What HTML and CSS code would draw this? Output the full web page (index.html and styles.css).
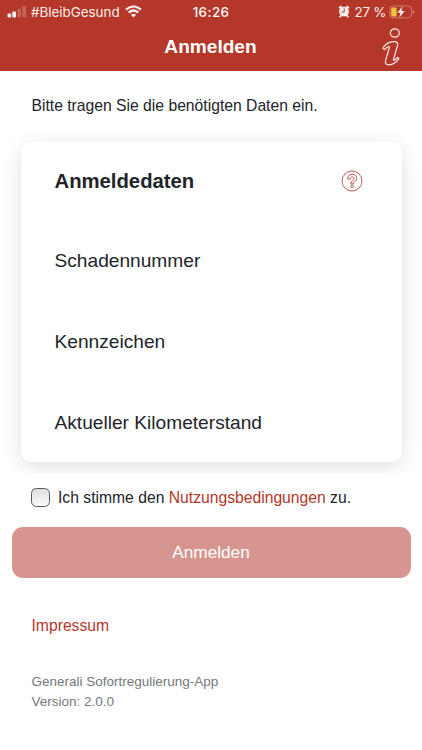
FILE: index.html
```html
<!DOCTYPE html>
<html lang="de">
<head>
    <meta charset="UTF-8">
    <meta name="viewport" content="width=device-width, initial-scale=1.0">
    <title>Anmelden</title>
    <link rel="stylesheet" href="styles.css">
</head>
<body>
    <header class="header">
        <div class="statusbar">
            <div class="status-left">
                <svg class="signal" width="20" height="12" viewBox="0 0 20 12" fill="#fff">
                    <rect x="0.5" y="7.5" width="3.7" height="4" rx="1"/>
                    <rect x="5.3" y="5.5" width="3.7" height="6" rx="1"/>
                    <rect x="10.3" y="3" width="3.7" height="8.5" rx="1" opacity=".25"/>
                    <rect x="15.3" y="0.3" width="3.7" height="11.2" rx="1" opacity=".25"/>
                </svg>
                <span class="carrier">#BleibGesund</span>
                <svg class="wifi" width="17" height="13" viewBox="0 0 17 13" fill="none" stroke="#fff" stroke-width="2.3">
                    <path d="M1 4.7Q8.5 -1.9 16 4.7"/>
                    <path d="M3.7 7.6Q8.5 3.5 13.3 7.6"/>
                    <path d="M8.5 12.4L5.9 9.7Q8.5 7.6 11.1 9.7Z" fill="#fff" stroke="none"/>
                </svg>
            </div>
            <span class="time">16:26</span>
            <div class="status-right">
                <svg width="12" height="13" viewBox="0 0 12 13" fill="none" stroke="#fff" stroke-linecap="round">
                    <circle cx="6" cy="6.6" r="4.9" fill="#fff" stroke="none"/>
                    <path d="M1.7 2.6L3 1.6M10.3 2.6L9 1.6M2.9 10.8L2.2 11.6M9.1 10.8L9.8 11.6" stroke-width="1.9"/>
                    <path d="M6.2 3.8V7H3.9" stroke="#b43729" stroke-width="1"/>
                </svg>
                <span class="percent">27 %</span>
                <svg class="battery" width="26" height="14" viewBox="0 0 28 14" preserveAspectRatio="none">
                    <rect x="0.8" y="0.9" width="23.6" height="12" rx="3.5" fill="none" stroke="#fff" stroke-opacity=".4"/>
                    <path d="M25.8 5v4q1.5-.6 1.5-2t-1.5-2z" fill="#fff" opacity=".45"/>
                    <path d="M4 2.4H8.2V11.4H4Q2.3 11.4 2.3 9.7V4.1Q2.3 2.4 4 2.4Z" fill="#f7cf46"/>
                    <path d="M14.6 1.3L9 7.7H12.3L11 12.7L16.8 6H13.4Z" fill="#fff"/>
                </svg>
            </div>
        </div>
        <div class="titlebar">
            <h1>Anmelden</h1>
            <svg class="info" width="22" height="40" viewBox="0 0 22 40" fill="none" stroke="#fff" stroke-opacity=".9" stroke-width="1.2" stroke-linejoin="round">
                <ellipse cx="13.8" cy="6" rx="4.5" ry="4.2"/>
                <path d="M2 21.2C4 17.5 8 14.9 12.6 14.7C15.7 14.5 17.2 15.7 16.5 18.5L12.5 32.7C12.4 34.1 14.4 33 16.4 30.3L18 31.6C15.2 35.4 11.5 37.8 7.9 37.8C4.9 37.7 3.8 36.1 4.6 33.3L8.3 20.7C8.6 18.9 6.7 19.2 3.6 22.6Z"/>
            </svg>
        </div>
    </header>

    <main>
        <p class="intro">Bitte tragen Sie die benötigten Daten ein.</p>

        <form>
            <div class="card-wrapper">
                <div class="card">
                    <div class="card-head">
                        <h2>Anmeldedaten</h2>
                        <svg class="help" width="22" height="22" viewBox="0 0 22 22" fill="none" stroke="#bd4a42" stroke-width=".9">
                            <circle cx="11" cy="11" r="10"/>
                            <path d="M6.7 8.9C6.7 6 8.5 4.4 11.2 4.4C13.9 4.4 15.7 5.9 15.7 8.3C15.7 11.1 12.5 11.4 12.4 13.9H9.8C9.6 10.7 13.1 10.4 13.1 8.5C13.1 6.4 9.3 6.2 8.9 9.3Z"/>
                            <circle cx="11.1" cy="16.3" r="1.4"/>
                        </svg>
                    </div>
                    <div class="field">Schadennummer</div>
                    <div class="field">Kennzeichen</div>
                    <div class="field">Aktueller Kilometerstand</div>
                </div>
            </div>

            <div class="terms">
                <input type="checkbox" id="terms">
                <label for="terms">Ich stimme den <a href="#">Nutzungsbedingungen</a> zu.</label>
            </div>

            <button type="button" class="submit">Anmelden</button>
        </form>
    </main>

    <footer>
        <a class="imprint" href="#">Impressum</a>
        <p>Generali Sofortregulierung-App<br>Version: 2.0.0</p>
    </footer>
</body>
</html>
```

FILE: styles.css
```css
* {
    box-sizing: border-box;
}
body {
    margin: 0;
    background: #fff;
    color: #212529;
    font-family: "Liberation Sans", Arial, sans-serif;
    font-size: 15.7px;
}
h1, h2, p {
    margin: 0;
}
a {
    color: #b43729;
    text-decoration: none;
}
svg {
    display: block;
}
.header {
    height: 71px;
    background: #b43729;
    color: #fff;
}
.statusbar {
    display: grid;
    grid-template-columns: 1fr auto 1fr;
    align-items: center;
    height: 23px;
    padding: 0 7px;
    font-family: Inter, sans-serif;
    font-size: 13.4px;
}
.status-left, .status-right {
    display: flex;
    align-items: center;
    opacity: .92;
}
.status-right {
    justify-content: flex-end;
}
.carrier {
    margin: 0 5px 0 4px;
}
.time {
    font-weight: 500;
    letter-spacing: .4px;
}
.percent {
    margin: 0 3px 0 5px;
    letter-spacing: -.3px;
}
.titlebar {
    display: grid;
    grid-template-columns: 1fr auto 1fr;
    align-items: center;
    height: 48px;
    padding: 0 19px 0 18px;
}
.titlebar h1 {
    grid-column: 2;
    font-size: 19.1px;
    line-height: 24px;
}
.info {
    justify-self: end;
}
.intro {
    padding: 25px 31px 0 31.5px;
    line-height: 20px;
}
.card-wrapper {
    padding: 25.5px 20.5px 11px;
    overflow: hidden;
}
.card {
    height: 320.5px;
    padding: 19.5px 39px 0 34px;
    border-radius: 10px;
    background: #fff;
    box-shadow: 0 5px 20px rgba(0, 0, 0, .12);
}
.card-head {
    display: flex;
    justify-content: space-between;
    align-items: center;
    height: 41px;
}
.card-head h2 {
    font-size: 20.3px;
}
.help {
    margin-top: -2px;
}
.field {
    display: flex;
    align-items: center;
    height: 81px;
    padding-top: 37.5px;
    font-size: 19.15px;
}
.terms {
    display: flex;
    align-items: center;
    gap: 8px;
    height: 49px;
    padding-left: 31px;
}
.terms input {
    width: 19px;
    height: 19px;
    margin: 0;
    appearance: none;
    border: 1.3px solid #55565a;
    border-radius: 5.5px;
    background: linear-gradient(#dedee0, #fbfbfb);
}
.submit {
    display: block;
    width: 399px;
    height: 50.5px;
    margin: 5px auto 0;
    border: none;
    border-radius: 11px;
    background: #d6958f;
    color: #fff;
    font-family: inherit;
    font-size: 17.2px;
}
footer {
    padding: 38.5px 31.5px 0;
}
.imprint {
    display: block;
    line-height: 20px;
}
footer p {
    margin-top: 36px;
    color: #74787b;
    font-size: 13.5px;
    line-height: 20px;
}
```
